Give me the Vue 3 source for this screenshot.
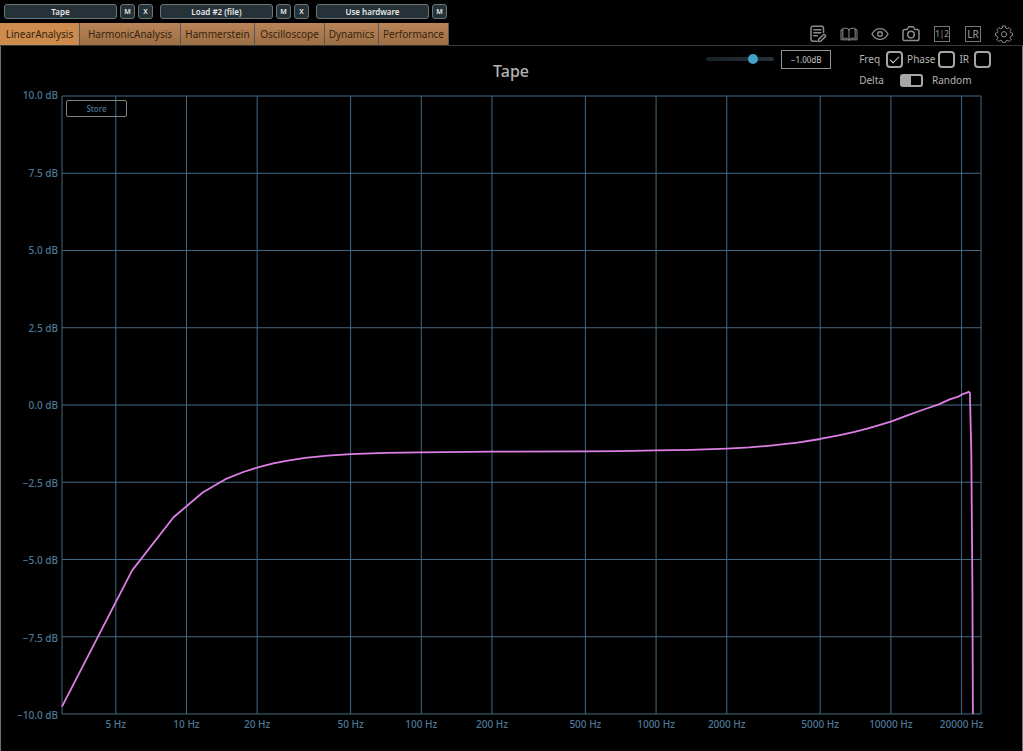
<script setup>
import { ref } from 'vue'

const loads = [
  { name: 'Tape', keys: ['M', 'X'] },
  { name: 'Load #2 (file)', keys: ['M', 'X'] },
  { name: 'Use hardware', keys: ['M'] },
]

const tabs = [
  { name: 'LinearAnalysis', width: 80 },
  { name: 'HarmonicAnalysis', width: 101 },
  { name: 'Hammerstein', width: 74 },
  { name: 'Oscilloscope', width: 70 },
  { name: 'Dynamics', width: 54 },
  { name: 'Performance', width: 70 },
]
const activeTab = ref('LinearAnalysis')

const gain = ref(-1)
const showFreq = ref(true)
const showPhase = ref(false)
const showIr = ref(false)
const randomMode = ref(false)

const minHz = 2.95
const maxHz = 24200
const toX = (hz) => (Math.log(hz / minHz) / Math.log(maxHz / minHz)) * 1000
const toY = (db) => ((10 - db) / 20) * 1000

const freqs = [5, 10, 20, 50, 100, 200, 500, 1000, 2000, 5000, 10000, 20000]
const levels = [10, 7.5, 5, 2.5, 0, -2.5, -5, -7.5, -10]
const levelLabel = (db) => `${db < 0 ? '−' : ''}${Math.abs(db).toFixed(1)} dB`

const response = [
  [2.95, -9.76], [5.86, -5.36], [8.79, -3.64], [11.72, -2.83], [14.65, -2.4],
  [17.58, -2.16], [20.51, -2], [23.44, -1.89], [27, -1.8], [32, -1.71],
  [40, -1.64], [50, -1.59], [70, -1.55], [100, -1.53], [200, -1.51],
  [500, -1.5], [700, -1.49], [1000, -1.47], [1400, -1.45], [2000, -1.41],
  [2500, -1.37], [3000, -1.32], [4000, -1.22], [5000, -1.1], [6000, -0.98],
  [7000, -0.87], [8000, -0.76], [10000, -0.54], [12000, -0.31], [14000, -0.13],
  [16000, 0.02], [17800, 0.18], [19500, 0.28], [20300, 0.36], [21000, 0.39],
  [21400, 0.43], [21700, 0.4], [22000, -1.5], [22250, -6], [22350, -10],
]
const points = response.map(([hz, db]) => `${toX(hz)},${toY(db)}`).join(' ')
</script>

<template>
  <main class="app">
    <header class="loads">
      <div v-for="load in loads" :key="load.name" class="load">
        <button class="slot">{{ load.name }}</button>
        <button v-for="key in load.keys" :key="key" class="key">{{ key }}</button>
      </div>
    </header>

    <div class="bar">
      <nav class="tabs">
        <button
          v-for="tab in tabs"
          :key="tab.name"
          class="tab"
          :class="{ active: tab.name === activeTab }"
          :style="{ width: tab.width + 'px' }"
          @click="activeTab = tab.name"
        >{{ tab.name }}</button>
      </nav>
      <div class="tools">
        <button class="tool" aria-label="Notes">
          <svg viewBox="0 0 18 18" stroke-width="1.5">
            <path d="M7.5 16.2H4a2 2 0 0 1-2-2V3.200a2 2 0 0 1 2-2h8.500a2 2 0 0 1 2 2v4.300M4.800 4.800h7M4.800 7.800h7M4.800 10.800h3.500" />
            <path d="M9.200 16.600l.5-2.500 4.400-4.100a1.300 1.300 0 0 1 2 1.900l-4.500 4.300z" />
          </svg>
        </button>
        <button class="tool" aria-label="Manual">
          <svg viewBox="0 0 18 18" stroke-width="1">
            <path d="M9 4.600C7.800 3.200 5 2.800 2.800 3.500v10C5 12.800 7.800 13.200 9 14.600c1.200-1.400 4-1.800 6.200-1.100v-10C13 2.800 10.200 3.200 9 4.600zv10M2.800 4.800H1v10h6.500c.7 0 .9.6 1.500.6s.8-.6 1.500-.6H17v-10h-1.800" />
          </svg>
        </button>
        <button class="tool" aria-label="View">
          <svg viewBox="0 0 18 18" stroke-width="1.4">
            <path d="M1 9c4-7.200 12-7.200 16 0-4 7.200-12 7.200-16 0z" />
            <circle cx="9" cy="9" r="2.300" />
          </svg>
        </button>
        <button class="tool" aria-label="Screenshot">
          <svg viewBox="0 0 18 18" stroke-width="1.5">
            <path d="M2.800 4.500h2.400l1-2c.2-.5.5-.7 1-.7h3.600c.5 0 .8.2 1 .7l1 2h2.400c1 0 1.800.8 1.800 1.800v7.400c0 1-.8 1.800-1.800 1.800H2.800c-1 0-1.800-.8-1.800-1.800V6.300c0-1 .8-1.800 1.800-1.800z" />
            <circle cx="9" cy="9.600" r="3.300" />
          </svg>
        </button>
        <button class="tool" aria-label="Compare"><span class="mode">1|2</span></button>
        <button class="tool" aria-label="Channels"><span class="mode lr">LR</span></button>
        <button class="tool" aria-label="Settings">
          <svg viewBox="0 0 18 18" stroke-width="1">
            <path d="M7.600 1h2.800l.5 2.200 1.400.6 1.900-1.200 2 2-1.200 1.900.6 1.300 1.900.4v2.600l-1.900.5-.6 1.300 1.200 1.900-2 2-1.900-1.200-1.400.6-.5 1.800H7.600l-.5-1.800-1.400-.6-1.900 1.200-2-2L3 12.600l-.6-1.300-1.900-.5V8.200l1.900-.4L3 6.500 1.800 4.600l2-2 1.900 1.200 1.400-.6z" />
            <circle cx="9" cy="9.300" r="2.700" />
          </svg>
        </button>
      </div>
    </div>

    <section class="panel">
      <div class="heading">
        <h1>Tape</h1>
        <div class="controls">
          <input v-model.number="gain" class="slider" type="range" min="-10" max="2.4" step="0.1" aria-label="Gain">
          <output class="value">−1.00dB</output>
          <div class="options">
            <div class="row">
              <label class="freq">Freq <input v-model="showFreq" type="checkbox"></label>
              <label>Phase <input v-model="showPhase" type="checkbox"></label>
              <label class="ir">IR <input v-model="showIr" type="checkbox"></label>
            </div>
            <div class="row modes">
              <label for="mode">Delta</label>
              <input id="mode" v-model="randomMode" class="switch" type="checkbox">
              <label for="mode">Random</label>
            </div>
          </div>
        </div>
      </div>

      <div class="chart">
        <div class="levels">
          <span v-for="db in levels" :key="db">{{ levelLabel(db) }}</span>
        </div>
        <div class="plot">
          <svg class="graph" viewBox="0 0 1000 1000" preserveAspectRatio="none">
            <line v-for="db in levels" :key="'l' + db" class="grid" x1="0" x2="1000" :y1="toY(db)" :y2="toY(db)" />
            <line v-for="hz in freqs" :key="'f' + hz" class="grid" y1="0" y2="1000" :x1="toX(hz)" :x2="toX(hz)" />
            <path class="grid" d="M0 0V1000M1000 0V1000" />
            <polyline class="curve" :points="points" />
          </svg>
          <button class="store">Store</button>
        </div>
        <div class="freqs">
          <span v-for="hz in freqs" :key="hz" :style="{ left: toX(hz) / 10 + '%' }">{{ hz }} Hz</span>
        </div>
      </div>
    </section>
  </main>
</template>

<style>
body {
  background: #000;
}
</style>

<style scoped>
.app {
  display: flex;
  flex-direction: column;
  box-sizing: border-box;
  min-height: 100vh;
  background: #000;
  color: #b4b4b4;
  font-family: "Noto Sans", "Open Sans", sans-serif;
}

button {
  margin: 0;
  padding: 0;
  font-family: inherit;
  background: none;
  border: 0;
  cursor: pointer;
}

.loads {
  display: flex;
  gap: 7px;
  height: 23px;
  padding: 4px 4px 0;
  box-sizing: border-box;
}

.load {
  display: flex;
  gap: 3px;
}

.slot,
.key {
  height: 15px;
  border: 1px solid #64777b;
  border-radius: 3px;
  background: #263238;
  color: #e6e9ea;
  font-size: 8px;
  font-weight: 600;
  line-height: 13px;
}

.slot {
  width: 113px;
}

.key {
  width: 15px;
  font-size: 7px;
}

.bar {
  display: flex;
  justify-content: space-between;
  height: 23px;
  box-sizing: border-box;
  border-bottom: 1px solid #343a3c;
}

.tabs {
  display: flex;
}

.tab {
  height: 22px;
  border-right: 1px solid #55575a;
  background: linear-gradient(#b98457, #9d6e44);
  color: #362310;
  font-size: 10px;
  line-height: 22px;
  white-space: nowrap;
}

.tab.active {
  background: #cd8b4d;
}

.tools {
  display: flex;
  gap: 13px;
  padding: 2px 10px 0 0;
}

.tool {
  width: 18px;
  height: 18px;
  color: #8c8c8c;
}

.tool svg {
  display: block;
  width: 18px;
  height: 18px;
  fill: none;
  stroke: currentColor;
  stroke-linejoin: round;
  stroke-linecap: round;
}

.mode {
  display: block;
  width: 14px;
  height: 14px;
  margin: 0 auto;
  border: 1px solid #777;
  font-size: 8px;
  font-weight: 500;
  line-height: 14px;
}

.lr {
  font-size: 10px;
}

.panel {
  display: flex;
  flex: 1;
  flex-direction: column;
  border: 1px solid #657477;
  border-top: 0;
  border-bottom: 0;
}

.heading {
  display: grid;
  grid-template-columns: 1fr auto 1fr;
  height: 50px;
  padding-right: 31px;
}

h1 {
  grid-column: 2;
  margin: 14px -15px 0 15px;
  font-size: 16px;
  font-weight: 500;
  line-height: 22px;
}

.controls {
  display: flex;
  justify-content: flex-end;
  align-items: flex-start;
  padding-top: 4px;
}

.slider {
  width: 68px;
  height: 10px;
  margin: 4px 7px 0 0;
  background: none;
  appearance: none;
}

.slider::-webkit-slider-runnable-track {
  height: 4px;
  border-radius: 2px;
  background: linear-gradient(90deg, #182126, #263238);
}

.slider::-webkit-slider-thumb {
  width: 10px;
  height: 10px;
  margin-top: -3px;
  border-radius: 50%;
  background: #42a2c8;
  appearance: none;
}

.value {
  width: 48px;
  height: 17px;
  margin-right: 28px;
  border: 1px solid #8e9799;
  font-size: 8px;
  font-weight: 500;
  line-height: 17px;
  text-align: center;
}

.options {
  font-size: 10px;
}

.row {
  display: flex;
  gap: 4px;
  height: 18px;
}

.row label {
  display: flex;
  gap: 3px;
  align-items: center;
}

.row .freq {
  gap: 6px;
}

.row .ir {
  gap: 5px;
}

.row input {
  display: block;
  width: 17px;
  height: 17px;
  margin: 0;
  box-sizing: border-box;
  border: 2px solid #a6a6a6;
  border-radius: 4px;
  appearance: none;
}

.row input:not(.switch):checked::after {
  content: "";
  display: block;
  width: 9px;
  height: 5px;
  margin: 3px 0 0 2px;
  box-sizing: border-box;
  border: solid #d2d2d2;
  border-width: 0 0 1px 1px;
  transform: rotate(-45deg);
}

.modes {
  gap: 9px;
  align-items: center;
  margin-top: 3px;
}

.row .switch {
  width: 23px;
  height: 13px;
  margin-left: 7px;
  border-radius: 3px;
  background: linear-gradient(90deg, #a6a6a6 50%, #000 50%);
}

.row .switch:checked {
  background: linear-gradient(90deg, #000 50%, #a6a6a6 50%);
}

.chart {
  display: grid;
  flex: 1;
  grid-template: 1fr 37px / 61px 1fr;
  padding-right: 41px;
  color: #4d7897;
  font-size: 10px;
  font-weight: 500;
}

.levels {
  display: flex;
  flex-direction: column;
  justify-content: space-between;
  margin: -8px 0;
  padding-right: 4px;
  line-height: 14px;
  text-align: right;
}

.plot {
  display: grid;
}

.graph {
  grid-area: 1 / 1;
  width: 100%;
  height: 100%;
  overflow: visible;
  contain: size;
}

.grid {
  fill: none;
  stroke: #426984;
  stroke-width: 1;
  vector-effect: non-scaling-stroke;
}

.curve {
  fill: none;
  stroke: #dc7fe4;
  stroke-width: 1.8;
  stroke-linejoin: round;
  vector-effect: non-scaling-stroke;
}

.store {
  grid-area: 1 / 1;
  align-self: start;
  width: 61px;
  height: 17px;
  margin: 4px 0 0 4px;
  border: 1px solid #7c8688;
  border-radius: 2px;
  color: #4d7897;
  font-size: 8px;
  font-weight: 500;
  line-height: 15px;
  z-index: 1;
}

.freqs {
  position: relative;
  grid-column: 2;
}

.freqs span {
  position: absolute;
  top: 3px;
  line-height: 14px;
  white-space: nowrap;
  transform: translateX(-50%);
}
</style>
